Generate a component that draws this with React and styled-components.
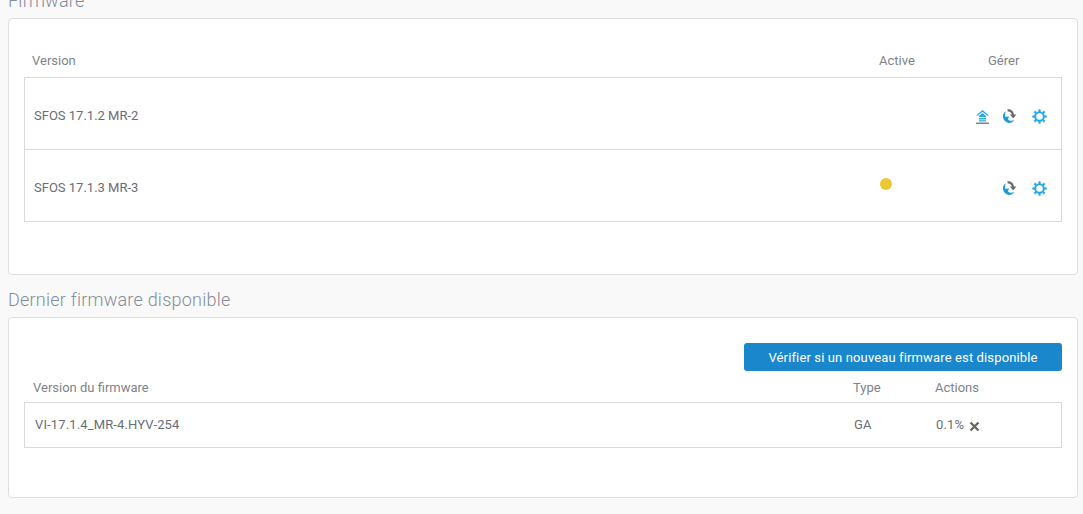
import React from 'react'
import styled, { createGlobalStyle } from 'styled-components'

const GlobalStyle = createGlobalStyle`
  html, body {
    margin: 0;
    padding: 0;
    background-color: #f9f9f9;
    overflow: hidden;
  }
  body {
    font-family: Roboto, "Liberation Sans", sans-serif;
  }
`

const Page = styled.div`
  width: 1070px;
  margin: -9px 0 0 8px;
`

const SectionTitle = styled.h2`
  margin: 0 0 7px;
  height: 20px;
  font-size: 18px;
  line-height: 20px;
  font-weight: 300;
  letter-spacing: 0.23px;
  color: #858c99;
`

const Panel = styled.section`
  box-sizing: border-box;
  height: ${(p) => p.$height}px;
  margin-bottom: ${(p) => p.$gap || 0}px;
  padding: ${(p) => p.$top}px 15px 0;
  background-color: #fff;
  border: 1px solid #dfdfdf;
  border-radius: 4px;
`

const HeadRow = styled.div`
  display: grid;
  grid-template-columns: ${(p) => p.$columns};
  align-items: center;
  height: ${(p) => p.$height}px;
  padding-left: ${(p) => p.$indent}px;
  font-size: 13px;
  color: #80838c;
`

const Table = styled.div`
  border: 1px solid #d9d9d9;
  border-bottom: 0;
`

const Row = styled.div`
  display: grid;
  grid-template-columns: ${(p) => p.$columns};
  align-items: center;
  box-sizing: border-box;
  height: ${(p) => p.$height}px;
  padding: ${(p) => p.$lift || 0}px 0 ${(p) => p.$drop || 0}px ${(p) => p.$indent}px;
  border-bottom: 1px solid #d9d9d9;
  font-size: 13px;
  letter-spacing: ${(p) => p.$spacing || 0}px;
  color: #696d78;
`

const Dot = styled.span`
  display: block;
  width: 12px;
  height: 12px;
  margin: 0 0 8px 2px;
  border-radius: 50%;
  background-color: #ecc733;
`

const Icons = styled.div`
  display: flex;
  justify-content: flex-end;
  align-items: center;
  gap: 12px;
  padding: 1px 14px 0 0;

  svg {
    flex-shrink: 0;
  }

  svg:last-child {
    margin-left: 3px;
  }
`

const Toolbar = styled.div`
  display: flex;
  justify-content: flex-end;
  margin-bottom: 1px;
`

const Button = styled.button`
  width: 318px;
  height: 28px;
  padding: 0;
  border: 0;
  border-radius: 3px;
  background-color: #1a87cd;
  color: #fff;
  font-family: inherit;
  font-size: 13px;
  letter-spacing: 0.13px;
  cursor: pointer;
`

const Progress = styled.div`
  display: flex;
  align-items: center;
  gap: 5px;
  margin-left: 1px;

  svg {
    margin-top: 4px;
  }
`

const UpgradeIcon = () => (
  <svg width="15" height="15" viewBox="0 0 15 15">
    <path d="M7.5 1 L14 6.5 H12 L7.5 2.8 L3 6.5 H1 Z" fill="#27a9e3" />
    <path d="M4 7 L7.5 4 L11 7 V8 H4 Z M4 9 H11 V10.4 H4 Z M4 11.2 H11 V12.4 H4 Z" fill="#27a9e3" />
    <path d="M1 14.2 H14" stroke="#555" strokeWidth="1.1" />
  </svg>
)

const SyncIcon = () => (
  <svg width="15" height="15" viewBox="0 0 15 15">
    <path d="M5.6 1.4 C8.4 1 10.6 2.8 11 6" fill="none" stroke="#66696e" strokeWidth="2.1" />
    <path d="M8 5.6 H14.4 L11.2 9.6 Z" fill="#66696e" />
    <path d="M3.8 2.2 C1.4 3.8 0.5 6.2 1 8.6 C1.6 11.4 3.8 13.6 6.6 14 C9 14.2 11 13.2 12.4 11 C10 12.2 7.6 12 6 10.4 L7 7.2 L3.4 8 C2.9 6 3 4 3.8 2.2 Z" fill="#1f9bd8" />
  </svg>
)

const GearIcon = () => (
  <svg width="15" height="15" viewBox="0 0 15 15">
    <circle cx="7.5" cy="7.5" r="4.3" fill="none" stroke="#27a9e3" strokeWidth="2" />
    <g stroke="#27a9e3" strokeWidth="2.2">
      <path d="M7.5 0.3 V3" />
      <path d="M7.5 12 V14.7" />
      <path d="M0.3 7.5 H3" />
      <path d="M12 7.5 H14.7" />
      <path d="M2.4 2.4 L4 4" />
      <path d="M11 11 L12.6 12.6" />
      <path d="M2.4 12.6 L4 11" />
      <path d="M11 4 L12.6 2.4" />
    </g>
  </svg>
)

const CloseIcon = () => (
  <svg width="11" height="11" viewBox="0 0 11 11">
    <path d="M1.5 1.5 L9.5 9.5 M9.5 1.5 L1.5 9.5" stroke="#666" strokeWidth="2.3" />
  </svg>
)

const versionColumns = '1fr 109px 74px'
const latestHeadColumns = '820px 82px 1fr'
const latestRowColumns = '819px 81px 1fr'

const App = () => {
  return (
    <Page>
      <GlobalStyle />
      <SectionTitle>Firmware</SectionTitle>
      <Panel $height={257} $gap={15} $top={24}>
        <HeadRow $columns={versionColumns} $height={34} $indent={8}>
          <span>Version</span>
          <span>Active</span>
          <span>Gérer</span>
        </HeadRow>
        <Table>
          <Row $columns={versionColumns} $height={72} $indent={9} $lift={4}>
            <span>SFOS 17.1.2 MR-2</span>
            <span />
            <Icons><UpgradeIcon /><SyncIcon /><GearIcon /></Icons>
          </Row>
          <Row $columns={versionColumns} $height={72} $indent={9} $lift={4}>
            <span>SFOS 17.1.3 MR-3</span>
            <Dot />
            <Icons><SyncIcon /><GearIcon /></Icons>
          </Row>
        </Table>
      </Panel>
      <SectionTitle>Dernier firmware disponible</SectionTitle>
      <Panel $height={181} $top={25}>
        <Toolbar>
          <Button>Vérifier si un nouveau firmware est disponible</Button>
        </Toolbar>
        <HeadRow $columns={latestHeadColumns} $height={30} $indent={9}>
          <span>Version du firmware</span>
          <span>Type</span>
          <span>Actions</span>
        </HeadRow>
        <Table>
          <Row $columns={latestRowColumns} $height={45} $indent={10} $drop={2} $spacing={0.13}>
            <span>VI-17.1.4_MR-4.HYV-254</span>
            <span>GA</span>
            <Progress>0.1% <CloseIcon /></Progress>
          </Row>
        </Table>
      </Panel>
    </Page>
  )
}

export default App
